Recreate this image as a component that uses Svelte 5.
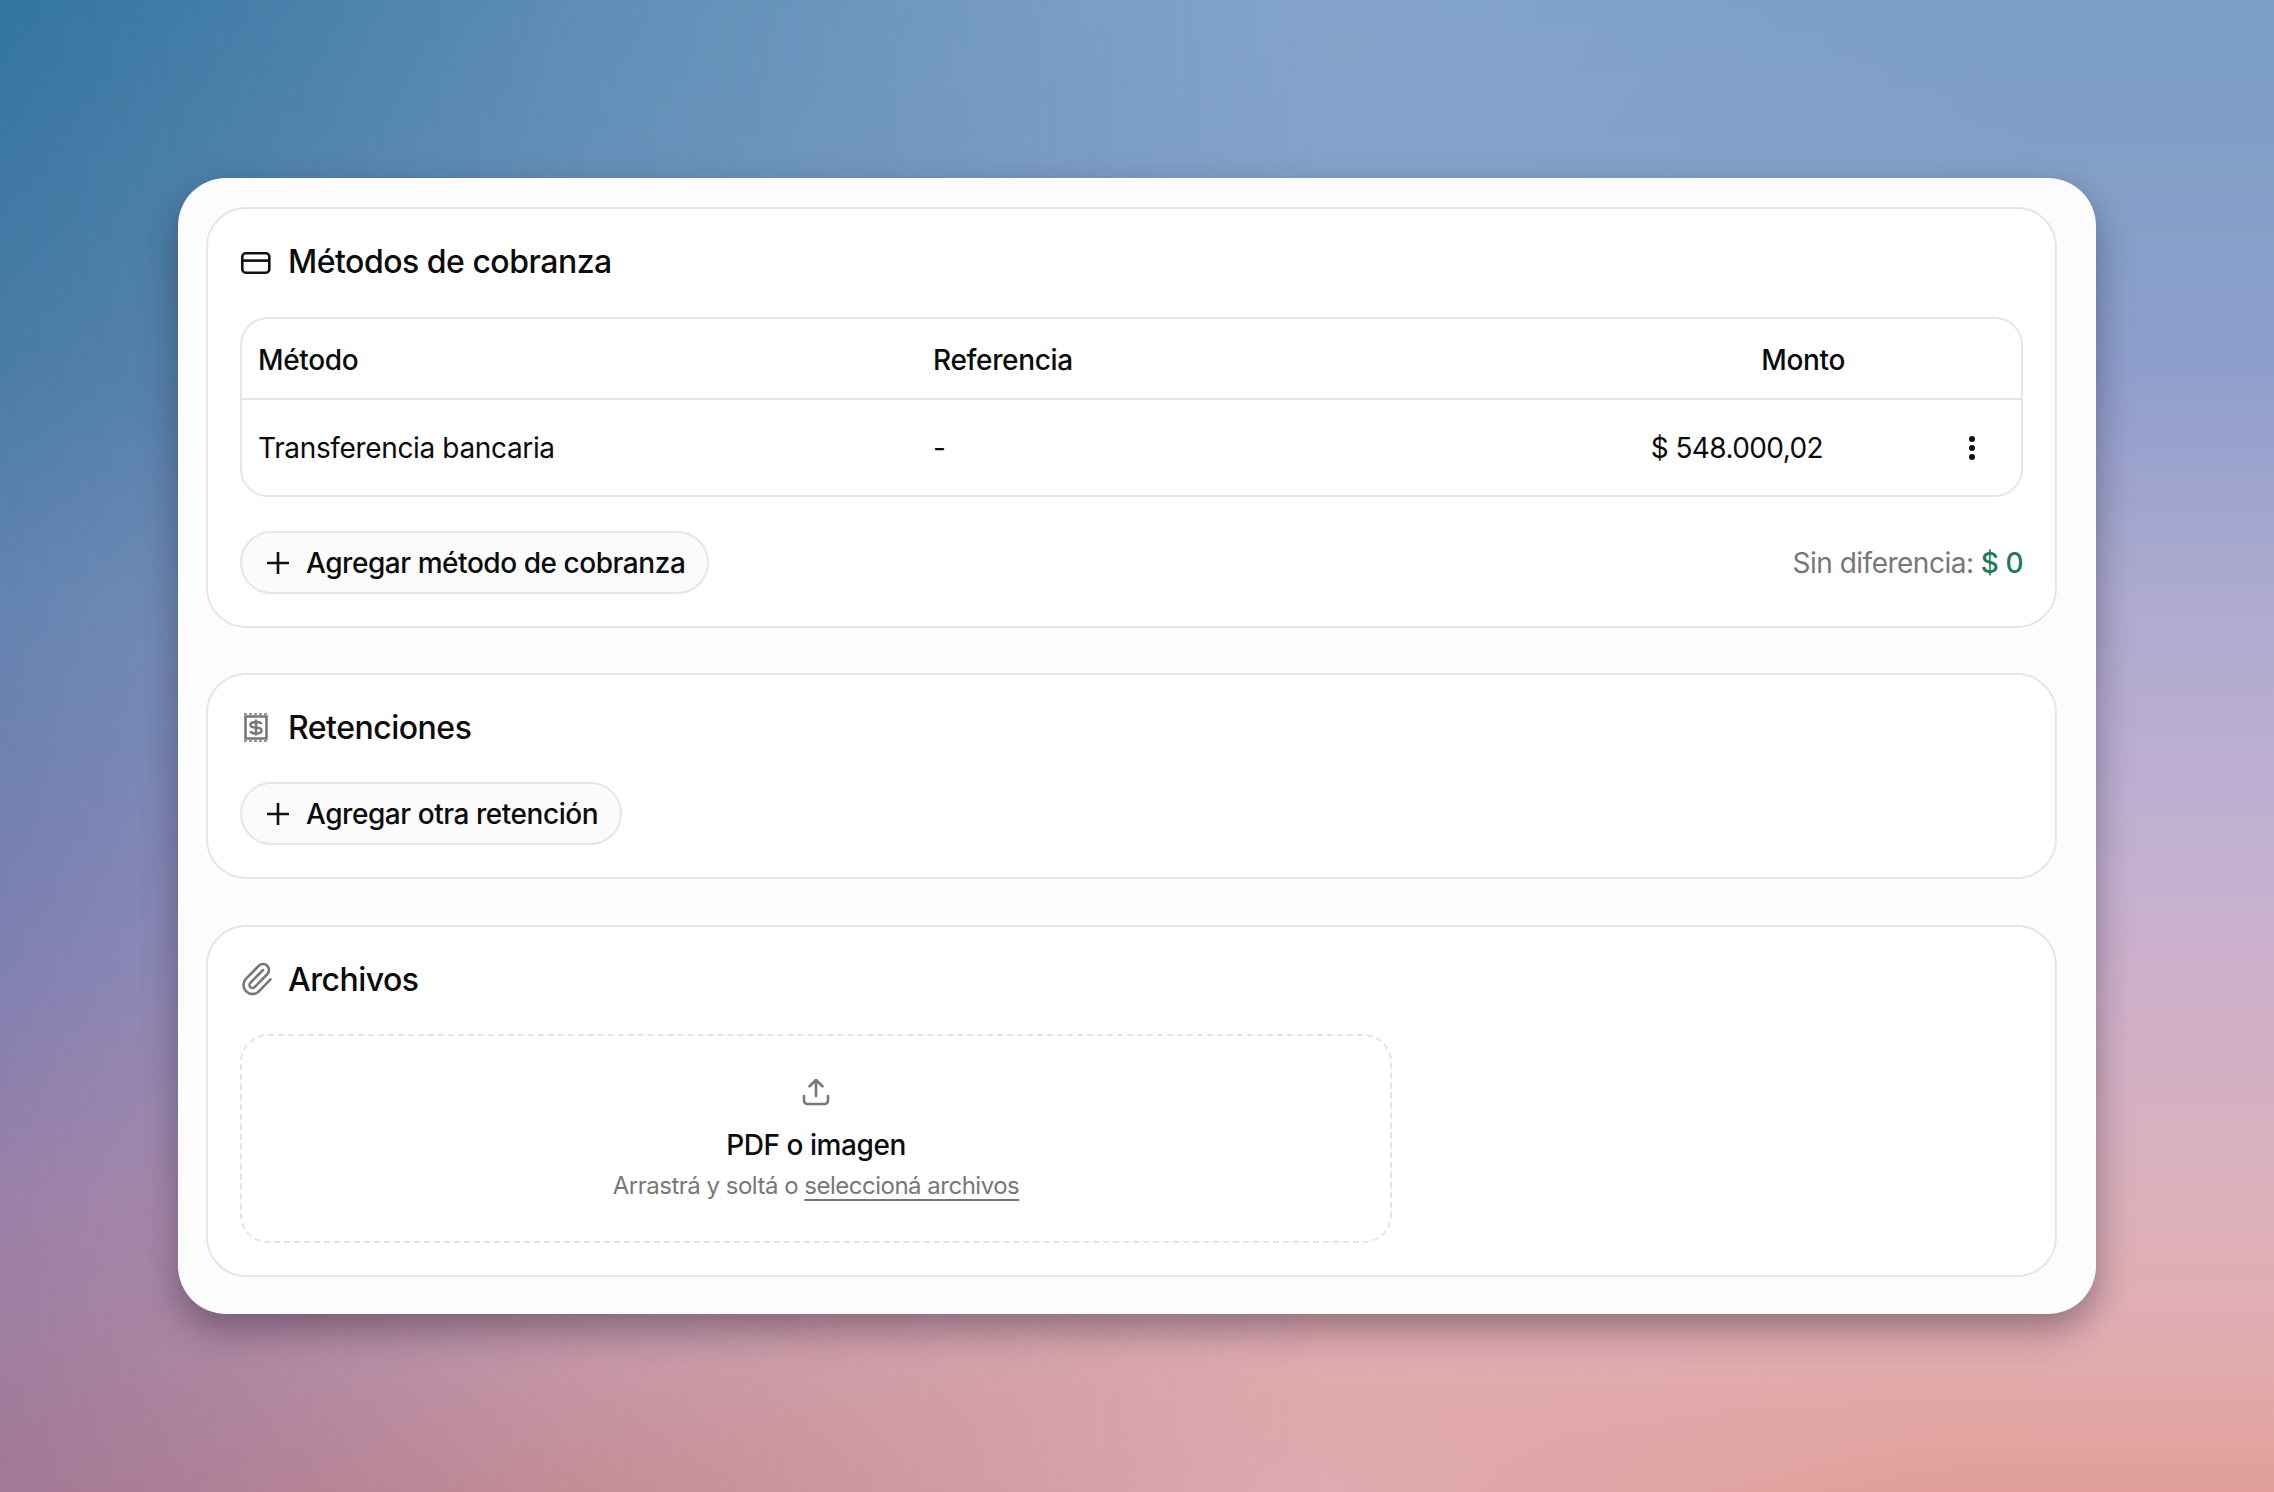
<script lang="ts">
  const methods = [{ name: "Transferencia bancaria", ref: "-", amount: "$ 548.000,02" }];
</script>

<div class="page">
  <div class="sheet">
    <section class="block first">
      <header class="block-head">
        <svg class="ic-card" viewBox="0 0 30 22" fill="none" stroke="#111" stroke-width="2.6">
          <rect x="1.3" y="1.3" width="27" height="19.4" rx="3.5" />
          <path d="M1.3 8.6h27" />
        </svg>
        <h2>Métodos de cobranza</h2>
      </header>

      <div class="table">
        <div class="row head">
          <span>Método</span>
          <span>Referencia</span>
          <span class="amount-head">Monto</span>
          <span></span>
        </div>
        {#each methods as m}
          <div class="row body">
            <span>{m.name}</span>
            <span>{m.ref}</span>
            <span class="amount">{m.amount}</span>
            <span class="more">
              <svg width="8" height="26" viewBox="0 0 8 26" fill="#111">
                <circle cx="4" cy="4" r="3" />
                <circle cx="4" cy="13" r="3" />
                <circle cx="4" cy="22" r="3" />
              </svg>
            </span>
          </div>
        {/each}
      </div>

      <div class="foot after-table">
        <button type="button" class="add">
          <svg width="22" height="22" viewBox="0 0 22 22" stroke="#111" stroke-width="2.6"><path d="M11 0v22M0 11h22" /></svg>
          Agregar método de cobranza
        </button>
        <span class="diff">Sin diferencia: <b>$ 0</b></span>
      </div>
    </section>

    <section class="block">
      <header class="block-head">
        <svg class="ic-receipt" viewBox="0 0 24 29" fill="none" stroke="#777">
          <path d="M1.5 3.5h21v22h-21z" stroke-width="2.6" />
          <path d="M0 1h24M0 28h24" stroke-width="1.6" stroke-dasharray="3 2" />
          <path d="M17.6 11.2c-.4-1.3-2.2-2.3-5.6-2.3-3.6 0-5.6 1.1-5.6 3s2 2.5 5.6 2.7 5.6.9 5.6 2.8-2 3-5.6 3c-3.4 0-5.2-1-5.6-2.3M12 6.6v15.8" stroke-width="2.5" />
        </svg>
        <h2>Retenciones</h2>
      </header>
      <div class="foot">
        <button type="button" class="add">
          <svg width="22" height="22" viewBox="0 0 22 22" stroke="#111" stroke-width="2.6"><path d="M11 0v22M0 11h22" /></svg>
          Agregar otra retención
        </button>
      </div>
    </section>

    <section class="block">
      <header class="block-head">
        <svg class="ic-clip" viewBox="0 0 24 24" fill="none" stroke="#777" stroke-width="1.7" stroke-linecap="round" stroke-linejoin="round">
          <path d="M13.234 20.252 21 12.3" />
          <path d="m16 6-8.414 8.586a2 2 0 0 0 0 2.828 2 2 0 0 0 2.828 0l8.414-8.586a4 4 0 0 0 0-5.656 4 4 0 0 0-5.656 0l-8.415 8.585a6 6 0 1 0 8.486 8.486" />
        </svg>
        <h2>Archivos</h2>
      </header>
      <div class="drop">
        <svg width="28" height="28" viewBox="0 0 28 28" fill="none" stroke="#777" stroke-width="2.6" stroke-linecap="round" stroke-linejoin="round">
          <path d="M14 18V2M7.5 8.3 14 2l6.5 6.3" />
          <path d="M2 18v4.5a3.5 3.5 0 0 0 3.5 3.5h17a3.5 3.5 0 0 0 3.5-3.5V18" />
        </svg>
        <strong>PDF o imagen</strong>
        <p>Arrastrá y soltá o <u>seleccioná archivos</u></p>
      </div>
    </section>
  </div>
</div>

<style>
  :global(body) {
    margin: 0;
  }

  .page {
    position: relative;
    min-height: 100vh;
    display: flex;
    align-items: center;
    justify-content: center;
    font-family: Inter, "Liberation Sans", sans-serif;
    color: #0c0c0c;
    background:
      radial-gradient(1000px 420px at 48% 0%, #86a5cc 0%, rgba(134, 165, 204, 0) 100%),
      radial-gradient(700px 200px at 56% 100%, #dfabb2 0%, rgba(223, 171, 178, 0) 100%),
      linear-gradient(180deg, #7a9ec4 0%, #85a0c8 15%, #8f9fcc 25%, #aeaad0 40%, #c0b0d2 55%, #ceb0cc 65%, #dcb0bb 80%, #e2adb0 90%, #e09f98 100%);
  }

  /* left side of the backdrop, fades out towards the middle */
  .page::before {
    content: "";
    position: absolute;
    inset: 0;
    background: linear-gradient(180deg, #33759f 0%, #4a7ca6 25%, #6284b0 40%, #7380b0 55%, #8080b0 65%, #9a7fa8 80%, #9f7d9f 90%, #a27896 100%);
    -webkit-mask-image: linear-gradient(90deg, #000 0%, rgba(0, 0, 0, 0.45) 25%, transparent 58%);
    mask-image: linear-gradient(90deg, #000 0%, rgba(0, 0, 0, 0.45) 25%, transparent 58%);
  }

  .sheet {
    position: relative;
    width: 1918px;
    box-sizing: border-box;
    padding: 29px 39px 37px 28px;
    display: flex;
    flex-direction: column;
    gap: 46px;
    background: #fcfcfc;
    border-radius: 48px;
    box-shadow: 0 16px 36px rgba(25, 15, 40, 0.38);
  }

  .block {
    padding: 32px;
    display: flex;
    flex-direction: column;
    gap: 35px;
    background: #fff;
    border: 2px solid #e6e6e6;
    border-radius: 40px;
  }

  .block.first {
    margin-bottom: -1px;
  }

  .block-head {
    height: 40px;
    display: flex;
    align-items: center;
  }

  .block-head h2 {
    margin: 0;
    padding-top: 1px;
    font-size: 32px;
    font-weight: 500;
    letter-spacing: -0.5px;
  }

  .ic-card {
    width: 30px;
    height: 22px;
    margin: 3px 17px 0 1px;
  }

  .ic-receipt {
    width: 24px;
    height: 29px;
    margin: 0 20px 0 4px;
  }

  .ic-clip {
    width: 36px;
    height: 36px;
    margin: 0 13px 0 -1px;
  }

  .table {
    margin-top: 1px;
    border: 2px solid #e6e6e6;
    border-radius: 28px;
  }

  .row {
    display: grid;
    grid-template-columns: 675px 610px 302px 1fr;
    align-items: center;
    padding-left: 16px;
    font-size: 28px;
    letter-spacing: -0.35px;
  }

  .row.head {
    height: 79px;
    font-weight: 500;
    border-bottom: 2px solid #e6e6e6;
  }

  .row.head span {
    padding-top: 3px;
  }

  .row.body {
    height: 95px;
  }

  .row.body span {
    padding-top: 1px;
  }

  .amount,
  .amount-head {
    text-align: right;
  }

  .row .amount {
    padding-right: 22px;
    letter-spacing: -0.6px;
  }

  .more {
    display: flex;
    justify-content: flex-end;
    padding-right: 45px;
  }

  .foot {
    display: flex;
    align-items: center;
    justify-content: space-between;
  }

  .after-table {
    margin-top: -1px;
  }

  .add {
    height: 63px;
    box-sizing: border-box;
    padding: 0 22px 0 25px;
    display: flex;
    align-items: center;
    gap: 17px;
    background: #fbfbfb;
    border: 2px solid #e6e6e6;
    border-radius: 32px;
    color: #0c0c0c;
    font-family: inherit;
    font-size: 28px;
    font-weight: 500;
    letter-spacing: -0.45px;
  }

  .diff {
    color: #777;
    font-size: 28px;
    letter-spacing: -0.5px;
  }

  .diff b {
    color: #1f7a57;
    font-weight: 500;
  }

  .drop {
    width: 1152px;
    height: 209px;
    box-sizing: border-box;
    display: flex;
    flex-direction: column;
    align-items: center;
    padding-top: 42px;
    border: 2px dashed #e4e4e4;
    border-radius: 28px;
  }

  .drop strong {
    margin-top: 22px;
    font-size: 28px;
    font-weight: 500;
    letter-spacing: -0.45px;
  }

  .drop p {
    margin: 9px 0 0;
    color: #777;
    font-size: 24px;
    letter-spacing: -0.5px;
  }

  .drop u {
    text-underline-offset: 5px;
    text-decoration-thickness: 2px;
  }
</style>
